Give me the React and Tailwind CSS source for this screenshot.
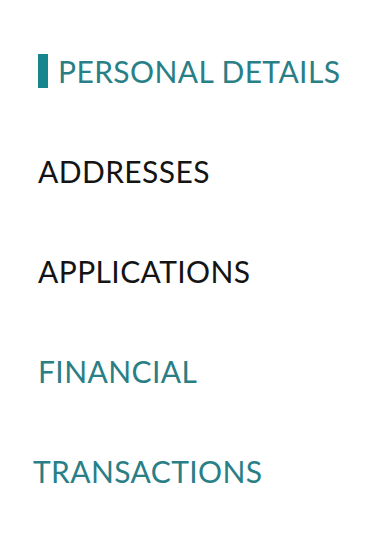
export default function App() {
  const font = { fontFamily: "Lato, 'Open Sans', sans-serif" };
  return (
    <div className="w-[366px] h-[542px] bg-white" style={font}>
      <nav className="flex flex-col pt-[21px]">
        <div className="h-[100px] flex items-center pl-[38px] gap-[10px]">
          <span className="w-[10px] h-[34px] bg-[#17868c]" />
          <span className="text-[30px] font-normal leading-none text-[#2a7f86] tracking-[0.4px]">PERSONAL DETAILS</span>
        </div>
        <div className="h-[100px] flex items-center pl-[38px]">
          <span className="text-[30px] font-normal leading-none text-[#141414] tracking-[0.4px]">ADDRESSES</span>
        </div>
        <div className="h-[100px] flex items-center pl-[38px]">
          <span className="text-[30px] font-normal leading-none text-[#141414] tracking-[0.4px]">APPLICATIONS</span>
        </div>
        <div className="h-[100px] flex items-center pl-[38px]">
          <span className="text-[30px] font-normal leading-none text-[#2a7f86] tracking-[0.4px]">FINANCIAL</span>
        </div>
        <div className="h-[100px] flex items-center pl-[33px]">
          <span className="text-[30px] font-normal leading-none text-[#2a7f86] tracking-[0.4px]">TRANSACTIONS</span>
        </div>
      </nav>
    </div>
  );
}
